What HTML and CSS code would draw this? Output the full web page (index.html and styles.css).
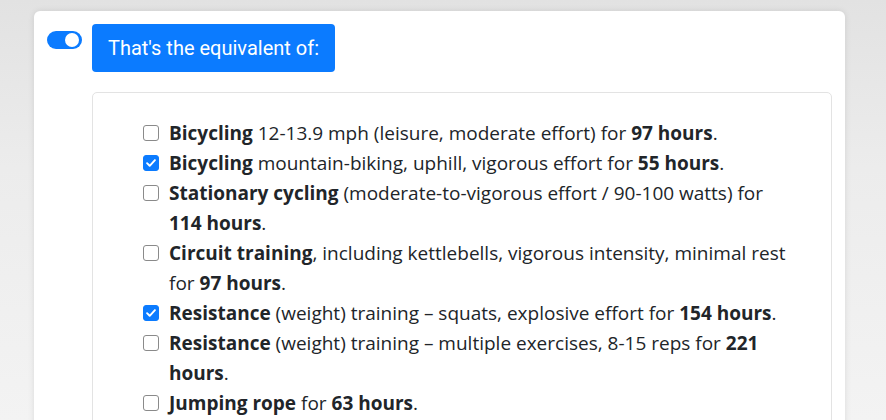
FILE: index.html
```html
<!DOCTYPE html>
<html lang="en">
<head>
<meta charset="utf-8">
<title>Equivalent</title>
<link rel="stylesheet" href="styles.css">
</head>
<body>
<div class="page">
  <div class="card">
    <div class="head">
      <span class="toggle"><span class="knob"></span></span>
      <button class="btn">That's the equivalent of:</button>
    </div>
    <div class="box">
      <ul class="list">
        <li><input type="checkbox" class="cb"><span><b>Bicycling</b> 12-13.9 mph (leisure, moderate effort) for <b>97 hours</b>.</span></li>
        <li><input type="checkbox" class="cb" checked><span><b>Bicycling</b> mountain-biking, uphill, vigorous effort for <b>55 hours</b>.</span></li>
        <li><input type="checkbox" class="cb"><span><b>Stationary cycling</b> (moderate-to-vigorous effort / 90-100 watts) for <b>114 hours</b>.</span></li>
        <li><input type="checkbox" class="cb"><span><b>Circuit training</b>, including kettlebells, vigorous intensity, minimal rest for <b>97 hours</b>.</span></li>
        <li><input type="checkbox" class="cb" checked><span><b>Resistance</b> (weight) training – squats, explosive effort for <b>154 hours</b>.</span></li>
        <li><input type="checkbox" class="cb"><span><b>Resistance</b> (weight) training – multiple exercises, 8-15 reps for <b>221 hours</b>.</span></li>
        <li><input type="checkbox" class="cb"><span><b>Jumping rope</b> for <b>63 hours</b>.</span></li>
      </ul>
    </div>
  </div>
</div>
</body>
</html>
```
FILE: styles.css
```css
html, body {
  margin: 0;
  height: 100%;
}
body {
  background: linear-gradient(180deg, #e2e2e2 0%, #ececec 40%, #f3f3f3 100%);
  overflow: hidden;
}
.page {
  padding: 11px 41px 0 34px;
}
.card {
  background: #fff;
  border-radius: 6px 6px 0 0;
  box-shadow: 0 0 6px rgba(0,0,0,0.10);
  padding: 13px 13px 40px 13px;
  min-height: 420px;
}
.head {
  display: flex;
  align-items: flex-start;
  gap: 10px;
}
.toggle {
  margin-top: 7px;
  width: 35px;
  height: 18px;
  border-radius: 9px;
  background: #0b7bff;
  position: relative;
  flex: none;
}
.knob {
  position: absolute;
  right: 3px;
  top: 2px;
  width: 14px;
  height: 14px;
  border-radius: 50%;
  background: #fff;
}
.btn {
  font-family: Roboto, "Liberation Sans", sans-serif;
  font-size: 20px;
  color: #fff;
  background: #0b7bff;
  border: none;
  border-radius: 4px;
  height: 48px;
  padding: 0 16px;
  width: 243px;
  text-align: center;
  white-space: nowrap;
}
.box {
  margin: 20px 0 0 45px;
  border: 1px solid #e3e3e3;
  border-radius: 5px;
  padding: 25px 40px 0 50px;
  min-height: 400px;
}
.list {
  list-style: none;
  margin: 0;
  padding: 0;
  font-family: "Open Sans", "Noto Sans", sans-serif;
  font-size: 19px;
  line-height: 30px;
  color: #212529;
}
.list li {
  display: flex;
  gap: 10px;
}
.list b {
  font-weight: 700;
}
.cb {
  appearance: none;
  -webkit-appearance: none;
  flex: none;
  width: 16px;
  height: 16px;
  margin: 7px 0 0 0;
  border: 1px solid #8a8a8a;
  border-radius: 3px;
  background: #fff;
}
.cb:checked {
  background: #0b7bff url("data:image/svg+xml,%3Csvg xmlns='http://www.w3.org/2000/svg' viewBox='0 0 16 16'%3E%3Cpath d='M3.5 8.2l3 3 6-6.5' fill='none' stroke='white' stroke-width='2.2' stroke-linecap='round' stroke-linejoin='round'/%3E%3C/svg%3E") center/100% no-repeat;
  border-color: #0b7bff;
}
```
